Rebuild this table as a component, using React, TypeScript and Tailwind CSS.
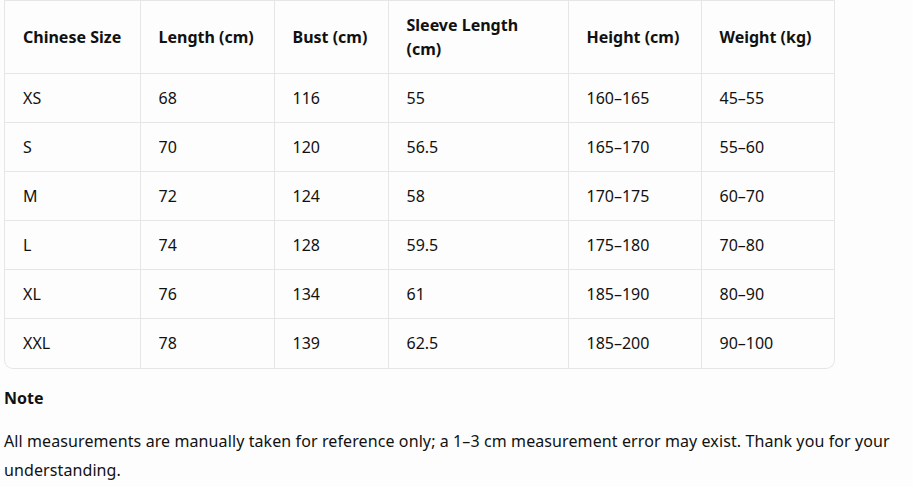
import React from "react";

const headers = ["Chinese Size", "Length (cm)", "Bust (cm)", "Sleeve Length (cm)", "Height (cm)", "Weight (kg)"];

const rows = [
  ["XS", "68", "116", "55", "160–165", "45–55"],
  ["S", "70", "120", "56.5", "165–170", "55–60"],
  ["M", "72", "124", "58", "170–175", "60–70"],
  ["L", "74", "128", "59.5", "175–180", "70–80"],
  ["XL", "76", "134", "61", "185–190", "80–90"],
  ["XXL", "78", "139", "62.5", "185–200", "90–100"],
];

const widths = ["w-[135px]", "w-[134px]", "w-[114px]", "w-[180px]", "w-[133px]", "w-[134px]"];

const App = () => {
  return (
    <div className="min-h-screen bg-[#fdfdfd] text-[#111] font-['Noto_Sans',sans-serif] text-[16px]">
      <div className="pl-[4px] w-[835px]">
        <div className="border border-[#e6e6e6] border-t-0 rounded-b-[9px] overflow-hidden">
          <table className="w-[830px] table-fixed border-collapse">
            <colgroup>
              {widths.map((w, i) => (
                <col key={i} className={w} />
              ))}
            </colgroup>
            <thead>
              <tr className="h-[73px] border-t border-[#e6e6e6]">
                {headers.map((h, i) => (
                  <th
                    key={h}
                    className={`text-left font-bold leading-[24px] pl-[18px] pr-[18px] align-middle ${
                      i > 0 ? "border-l border-[#e6e6e6]" : ""
                    }`}
                  >
                    {h}
                  </th>
                ))}
              </tr>
            </thead>
            <tbody>
              {rows.map((r) => (
                <tr key={r[0]} className="h-[49px] border-t border-[#e6e6e6]">
                  {r.map((c, i) => (
                    <td
                      key={i}
                      className={`pl-[18px] pr-[18px] align-middle ${i > 0 ? "border-l border-[#e6e6e6]" : ""}`}
                    >
                      {c}
                    </td>
                  ))}
                </tr>
              ))}
            </tbody>
          </table>
        </div>
      </div>
      <div className="px-[4px] pt-[17px]">
        <p className="font-bold leading-[24px]">Note</p>
        <p className="mt-[17px] leading-[29px] w-[900px] tracking-[0.1px]">
          All measurements are manually taken for reference only; a 1–3 cm measurement error may exist. Thank you for
          your understanding.
        </p>
      </div>
    </div>
  );
};

export default App;
